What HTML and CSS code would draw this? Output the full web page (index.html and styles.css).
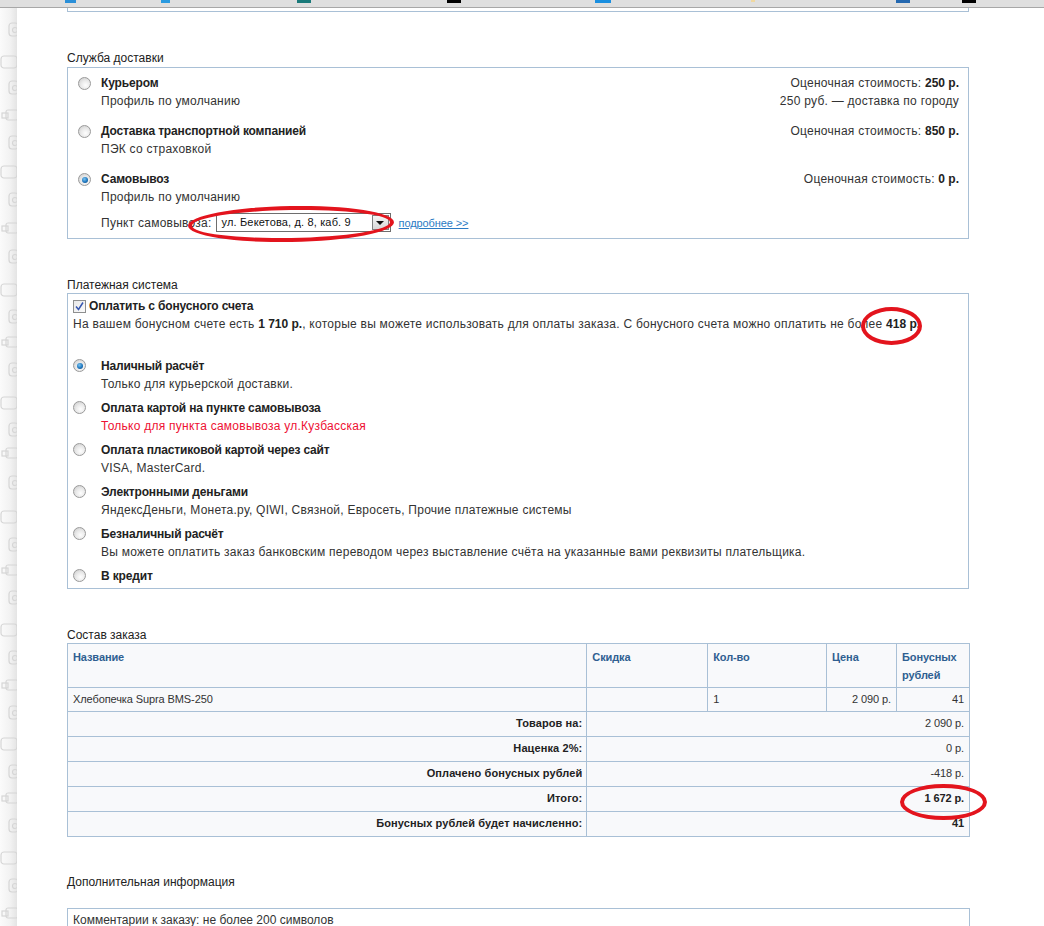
FILE: index.html
```html
<!DOCTYPE html>
<html lang="ru">
<head>
<meta charset="utf-8">
<title>Оформление заказа</title>
<link rel="stylesheet" href="styles.css">
</head>
<body>
<div class="topbar">
  <span class="ti t1"></span><span class="ti t2"></span><span class="ti t3"></span><span class="ti t4"></span>
  <span class="ti t5"></span><span class="ti t6"></span><span class="ti t7"></span><span class="ti t8"></span>
</div>
<div class="page">
  <aside class="strip">
    <svg width="17" height="918" viewBox="0 0 17 918" class="strip-svg">
      <defs>
        <g id="cam"><rect x="9" y="-7" width="9" height="13" rx="3"/><circle cx="15" cy="0" r="2.5"/></g>
        <g id="box"><rect x="1" y="-6" width="16" height="12" rx="3"/></g>
        <g id="plug"><rect x="6" y="-5" width="12" height="10" rx="2"/><rect x="2" y="-2" width="6" height="5"/></g>
      </defs>
      <g fill="none" stroke="#d6d6d6" stroke-width="1.2">
        <use href="#cam" y="22"/><use href="#box" y="54"/><use href="#cam" y="80"/><use href="#plug" y="107"/>
        <use href="#cam" y="135"/><use href="#box" y="164"/><use href="#cam" y="192"/><use href="#plug" y="220"/>
        <use href="#cam" y="249"/><use href="#box" y="282"/><use href="#cam" y="309"/><use href="#plug" y="334"/>
        <use href="#cam" y="362"/><use href="#box" y="395"/><use href="#cam" y="422"/><use href="#plug" y="445"/>
        <use href="#cam" y="475"/><use href="#box" y="509"/><use href="#cam" y="537"/><use href="#plug" y="562"/>
        <use href="#cam" y="590"/><use href="#box" y="622"/><use href="#cam" y="650"/><use href="#plug" y="677"/>
        <use href="#cam" y="705"/><use href="#box" y="736"/><use href="#cam" y="764"/><use href="#plug" y="790"/>
        <use href="#cam" y="818"/><use href="#box" y="850"/><use href="#cam" y="878"/><use href="#plug" y="905"/>
      </g>
    </svg>
  </aside>

  <main class="main">
    <div class="prev-box"></div>

    <section class="section delivery-section">
      <div class="section-title">Служба доставки</div>
      <div class="box delivery">
        <div class="ditem">
          <span class="radio"></span>
          <div class="dinfo">
            <div class="ttl">Курьером</div>
            <div class="sub">Профиль по умолчанию</div>
          </div>
          <div class="dprice">
            <div>Оценочная стоимость: <b>250 р.</b></div>
            <div>250 руб. — доставка по городу</div>
          </div>
        </div>
        <div class="ditem">
          <span class="radio"></span>
          <div class="dinfo">
            <div class="ttl">Доставка транспортной компанией</div>
            <div class="sub">ПЭК со страховкой</div>
          </div>
          <div class="dprice">
            <div>Оценочная стоимость: <b>850 р.</b></div>
          </div>
        </div>
        <div class="ditem">
          <span class="radio checked"></span>
          <div class="dinfo">
            <div class="ttl">Самовывоз</div>
            <div class="sub">Профиль по умолчанию</div>
            <div class="pickup">
              <span>Пункт самовывоза:</span>
              <span class="select"><span class="sel-text">ул. Бекетова, д. 8, каб. 9</span><span class="sel-btn"><span class="tri"></span></span></span>
              <a class="more" href="#">подробнее &gt;&gt;</a>
            </div>
          </div>
          <div class="dprice">
            <div>Оценочная стоимость: <b>0 р.</b></div>
          </div>
        </div>
      </div>
    </section>

    <section class="section pay-section">
      <div class="section-title">Платежная система</div>
      <div class="box pay">
        <div class="bonus-row">
          <span class="checkbox"><svg width="11" height="11" viewBox="0 0 11 11"><path d="M2 5.5 L4.5 8.5 L9 1.5" fill="none" stroke="#3556b0" stroke-width="1.5"/></svg></span>
          <b class="ttl">Оплатить с бонусного счета</b>
        </div>
        <div class="bonus-text">На вашем бонусном счете есть <b>1 710 р.</b>, которые вы можете использовать для оплаты заказа. С бонусного счета можно оплатить не более <b>418 р.</b></div>

        <div class="plist">
          <div class="pitem">
            <span class="radio checked"></span>
            <div>
              <div class="ttl">Наличный расчёт</div>
              <div class="sub">Только для курьерской доставки.</div>
            </div>
          </div>
          <div class="pitem">
            <span class="radio"></span>
            <div>
              <div class="ttl">Оплата картой на пункте самовывоза</div>
              <div class="sub red">Только для пункта самовывоза ул.Кузбасская</div>
            </div>
          </div>
          <div class="pitem">
            <span class="radio"></span>
            <div>
              <div class="ttl">Оплата пластиковой картой через сайт</div>
              <div class="sub">VISA, MasterCard.</div>
            </div>
          </div>
          <div class="pitem">
            <span class="radio"></span>
            <div>
              <div class="ttl">Электронными деньгами</div>
              <div class="sub">ЯндексДеньги, Монета.ру, QIWI, Связной, Евросеть, Прочие платежные системы</div>
            </div>
          </div>
          <div class="pitem">
            <span class="radio"></span>
            <div>
              <div class="ttl">Безналичный расчёт</div>
              <div class="sub">Вы можете оплатить заказ банковским переводом через выставление счёта на указанные вами реквизиты плательщика.</div>
            </div>
          </div>
          <div class="pitem">
            <span class="radio"></span>
            <div>
              <div class="ttl">В кредит</div>
            </div>
          </div>
        </div>
      </div>
    </section>

    <section class="section order-section">
      <div class="section-title">Состав заказа</div>
      <table class="order">
        <colgroup>
          <col class="c1"><col class="c2"><col class="c3"><col class="c4"><col class="c5">
        </colgroup>
        <thead>
          <tr>
            <th>Название</th>
            <th>Скидка</th>
            <th>Кол-во</th>
            <th>Цена</th>
            <th>Бонусных рублей</th>
          </tr>
        </thead>
        <tbody>
          <tr class="prow">
            <td>Хлебопечка Supra BMS-250</td>
            <td></td>
            <td>1</td>
            <td class="r">2 090 р.</td>
            <td class="r">41</td>
          </tr>
          <tr class="trow"><td class="lbl">Товаров на:</td><td colspan="4" class="r">2 090 р.</td></tr>
          <tr class="trow"><td class="lbl">Наценка 2%:</td><td colspan="4" class="r">0 р.</td></tr>
          <tr class="trow"><td class="lbl">Оплачено бонусных рублей</td><td colspan="4" class="r">-418 р.</td></tr>
          <tr class="trow"><td class="lbl">Итого:</td><td colspan="4" class="r"><b>1 672 р.</b></td></tr>
          <tr class="trow"><td class="lbl">Бонусных рублей будет начисленно:</td><td colspan="4" class="r"><b>41</b></td></tr>
        </tbody>
      </table>
    </section>

    <section class="section extra-section">
      <div class="section-title">Дополнительная информация</div>
      <div class="comment-box">Комментарии к заказу: не более 200 символов</div>
    </section>
  </main>
</div>

<span class="mark m1"></span>
<span class="mark m2"></span>
<span class="mark m3"></span>
</body>
</html>
```

FILE: styles.css
```css
* { box-sizing: border-box; }

html, body {
  margin: 0;
  padding: 0;
  background: #fff;
  height: 926px;
  overflow: hidden;
}

body {
  font-family: "Liberation Sans", Arial, sans-serif;
  font-size: 12px;
  letter-spacing: 0.25px;
  color: #333;
  position: relative;
}

.topbar {
  height: 8px;
  background: #dfdfdf;
  border-bottom: 1px solid #a7a7a7;
  position: relative;
  display: flex;
}

.ti {
  display: block;
  height: 3px;
  position: absolute;
  top: 0;
}
.t1 { left: 65px; width: 11px; background: #2a8fd8; }
.t2 { left: 161px; width: 9px; background: #2a9ae0; }
.t3 { left: 297px; width: 14px; background: #1a7a7a; }
.t4 { left: 447px; width: 14px; background: #000; }
.t5 { left: 595px; width: 16px; background: #1a8fe0; }
.t6 { left: 751px; width: 4px; height: 2px; background: #f0d8a0; }
.t7 { left: 896px; width: 14px; background: #2468b0; }
.t8 { left: 962px; width: 14px; background: #000; }

.page {
  display: flex;
}

.strip {
  width: 17px;
  flex: none;
  height: 918px;
  background: linear-gradient(to right, #fbfbfb 0%, #f2f2f2 60%, #e4e4e4 100%);
}
.strip-svg { display: block; }

.main {
  padding-left: 50px;
  width: 969px;
  flex: none;
}

.prev-box {
  width: 902px;
  height: 4px;
  border: 1px solid #a9c0d6;
  border-top: none;
}

.section-title {
  font-size: 12px;
  letter-spacing: 0;
  color: #222;
  line-height: 14px;
}

.box {
  width: 902px;
  border: 1px solid #a9c0d6;
}

/* Delivery */
.delivery-section { margin-top: 39px; }
.delivery-section .section-title { margin-bottom: 2px; }

.delivery {
  padding: 6px 9px 6px 10px;
  display: flex;
  flex-direction: column;
  gap: 12px;
}

.ditem {
  display: flex;
  align-items: flex-start;
  line-height: 18px;
}

.ditem > .radio { margin: 3px 10px 0 0; }

.dinfo { flex: 1; }

.ttl {
  font-weight: bold;
  letter-spacing: -0.15px;
  color: #222;
}

.sub { color: #333; }

.dprice {
  text-align: right;
  color: #333;
}
.dprice b { color: #222; letter-spacing: 0; }

.pickup {
  display: flex;
  align-items: center;
  margin-top: 7px;
  height: 19px;
}

.select {
  display: inline-flex;
  align-items: center;
  width: 175px;
  height: 19px;
  border: 1px solid #6e6e6e;
  background: #fff;
  margin-left: 4px;
  padding: 0 1px 0 5px;
  color: #111;
  font-size: 11px;
  letter-spacing: 0.15px;
}
.sel-text { flex: 1; line-height: 17px; }
.sel-btn {
  width: 17px;
  height: 15px;
  border: 1px solid #7f7f7f;
  background: linear-gradient(#f4f4f4, #d8d8d8);
  display: flex;
  align-items: center;
  justify-content: center;
}
.tri {
  width: 0;
  height: 0;
  border-left: 4px solid transparent;
  border-right: 4px solid transparent;
  border-top: 4px solid #111;
}

.more {
  margin-left: 8px;
  font-size: 11px;
  letter-spacing: -0.1px;
  color: #2b7bc4;
  text-decoration: underline;
}

/* radios */
.radio {
  display: block;
  flex: none;
  width: 13px;
  height: 13px;
  border-radius: 50%;
  border: 1px solid #9a9a9a;
  background: radial-gradient(circle at 60% 65%, #fefefe 0%, #eaeaea 45%, #c8c8c8 100%);
  position: relative;
}
.radio.checked::after {
  content: "";
  position: absolute;
  left: 2.5px;
  top: 2.5px;
  width: 6px;
  height: 6px;
  border-radius: 50%;
  background: radial-gradient(circle at 40% 35%, #7cc4f0 0%, #1f78c0 55%, #0c3d70 100%);
}

/* Payment */
.pay-section { margin-top: 39px; }
.pay-section .section-title { margin-bottom: 1px; }

.pay {
  padding: 3px 8px 3px 5px;
  line-height: 18px;
}

.bonus-row {
  display: flex;
  align-items: center;
  gap: 3px;
  height: 18px;
}

.checkbox {
  width: 13px;
  height: 13px;
  border: 1px solid #8e8f8f;
  background: linear-gradient(135deg, #e8e8e8, #fbfbfb);
  display: flex;
  align-items: center;
  justify-content: center;
}

.bonus-text { color: #333; }
.bonus-text b { color: #222; letter-spacing: 0; }

.plist {
  margin-top: 24px;
  display: flex;
  flex-direction: column;
  gap: 6px;
}

.pitem {
  display: flex;
  align-items: flex-start;
}
.pitem > .radio { margin: 2px 15px 0 0; }

.red { color: #ee1133; }

/* Order table */
.order-section { margin-top: 39px; }
.order-section .section-title { margin-bottom: 1px; }

.order {
  width: 903px;
  border-collapse: collapse;
  font-size: 11px;
  letter-spacing: -0.1px;
  background: #f8f9fb;
  color: #333;
}
.c1 { width: 520px; }
.c2 { width: 121px; }
.c3 { width: 119px; }
.c4 { width: 70px; }
.c5 { width: 73px; }

.order th, .order td {
  border: 1px solid #a9c0d6;
  padding: 0 5px;
  vertical-align: top;
  text-align: left;
}

.order th {
  color: #2f5f91;
  font-weight: bold;
  line-height: 18px;
  padding-top: 4px;
  padding-bottom: 3px;
  height: 44px;
}

.prow td {
  height: 24px;
  line-height: 22px;
}

.trow td {
  height: 25px;
  line-height: 23px;
}

.order td.r { text-align: right; }
.order td.lbl {
  text-align: right;
  font-weight: bold;
  letter-spacing: 0.1px;
  color: #222;
  padding-right: 4px;
}
.order b { color: #222; }

/* Extra */
.extra-section { margin-top: 38px; }
.extra-section .section-title { margin-bottom: 19px; }

.comment-box {
  width: 903px;
  height: 40px;
  border: 1px solid #a9c0d6;
  padding: 3px 5px;
  font-size: 12px;
  letter-spacing: 0;
  line-height: 16px;
  color: #333;
}

/* red annotation marks drawn over the screenshot */
.mark {
  position: absolute;
  border: 4px solid #e3141d;
  border-radius: 50%;
  pointer-events: none;
}
.m1 { left: 188px; top: 206px; width: 206px; height: 36px; transform: rotate(-1deg); }
.m2 { left: 861px; top: 307px; width: 61px; height: 38px; }
.m3 { left: 900px; top: 784px; width: 87px; height: 36px; }
```
